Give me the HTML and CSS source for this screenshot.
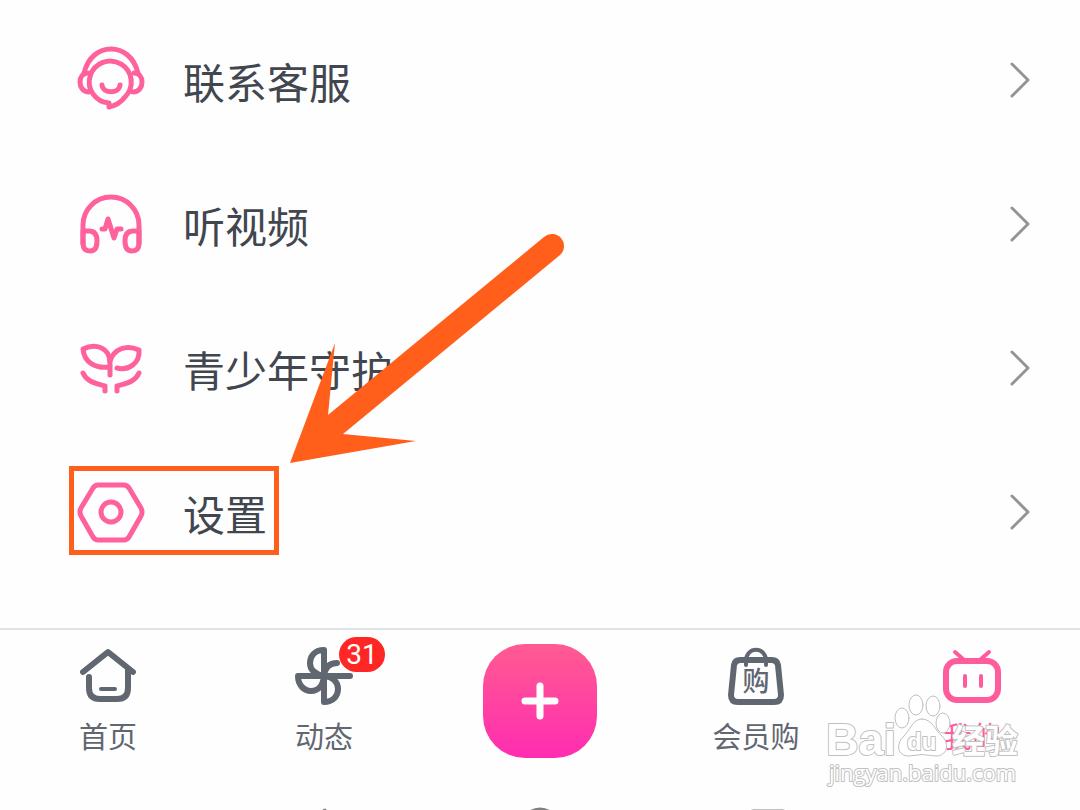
FILE: index.html
```html
<!DOCTYPE html>
<html lang="zh-CN">
<head>
    <meta charset="UTF-8">
    <meta name="viewport" content="width=device-width, initial-scale=1">
    <title>我的</title>
    <link rel="stylesheet" href="styles.css">
</head>
<body>

<main class="menu">
    <a class="row" href="#service">
        <svg class="row-icon" viewBox="0 0 72 72">
            <path d="M34 59A21 21 0 1 1 50 53Q44 61 34 63Z"/>
            <path d="M9 29C13 13 24 5 36 5S59 13 63 29"/>
            <path d="M13 29C8 29 5 33 5 38S8 48 14 48M59 29C64 29 67 33 67 38S64 48 58 48"/>
            <path d="M27 41C28 50 44 50 45 41"/>
        </svg>
        <span class="row-text">联系客服</span>
        <svg class="arrow" viewBox="0 0 24 40"><path d="M4 4L20 20L4 36"/></svg>
    </a>
    <a class="row" href="#listen">
        <svg class="row-icon" viewBox="0 0 72 72">
            <path d="M8 56V37A28 28 0 0 1 64 37V56"/>
            <path d="M8 43H14C20 43 22 47 22 53S20 63 15 63S8 60 8 55ZM64 43H58C52 43 50 47 50 53S52 63 57 63S64 60 64 55Z"/>
            <path d="M27 41H30L33 31L39 50L42 41H46"/>
        </svg>
        <span class="row-text">听视频</span>
        <svg class="arrow" viewBox="0 0 24 40"><path d="M4 4L20 20L4 36"/></svg>
    </a>
    <a class="row" href="#youth">
        <svg class="row-icon" viewBox="0 0 72 72">
            <path d="M35 35C20 37 9 30 8 17C20 11 35 15 35 31V43"/>
            <path d="M35 29C39 17 51 12 64 18C65 31 54 39 42 36"/>
            <path d="M8 41C12 50 20 51 30 54V59M64 41C60 50 52 51 42 54V59"/>
        </svg>
        <span class="row-text">青少年守护</span>
        <svg class="arrow" viewBox="0 0 24 40"><path d="M4 4L20 20L4 36"/></svg>
    </a>
    <a class="row marked" href="#settings">
        <svg class="row-icon" viewBox="0 0 72 72">
            <path d="M23 9H49Q52 9 54 12L66 32Q68 36 66 40L54 61Q52 64 49 64H23Q20 64 18 61L6 40Q4 36 6 32L18 12Q20 9 23 9Z"/>
            <circle cx="36" cy="36" r="10"/>
        </svg>
        <span class="row-text">设置</span>
        <svg class="arrow" viewBox="0 0 24 40"><path d="M4 4L20 20L4 36"/></svg>
    </a>

    <svg class="pointer" viewBox="0 0 280 232">
        <path d="M2 231L128 209L55 202L272 23A12 12 0 0 0 256 5L40 183L47 111Z"/>
    </svg>
</main>

<nav class="tabs">
    <a class="tab" href="#home">
        <svg class="tab-icon" viewBox="0 0 64 64">
            <path d="M7 28L32 8L57 28M13 33V44Q13 55 24 55H41Q52 55 52 44V25"/>
            <path class="thin" d="M25 45H39"/>
        </svg>
        <span class="tab-text">首页</span>
    </a>
    <a class="tab" href="#feed">
        <span class="icon-box">
            <svg class="tab-icon" viewBox="0 0 64 64">
                <path d="M32 32V6C22 6 18 13 18 19S22 30 32 32"/>
                <path d="M32 32H6C6 41 12 47 19 47S31 42 32 32"/>
                <path d="M32 32V58C41 58 46 52 46 45S41 33 32 32"/>
                <path d="M32 32H58M32 32C33 23 38 19 45 19"/>
            </svg>
            <span class="badge">31</span>
        </span>
        <span class="tab-text">动态</span>
    </a>
    <button class="publish" type="button" aria-label="发布">
        <svg viewBox="0 0 38 38"><path d="M19 4V34M4 19H34"/></svg>
    </button>
    <a class="tab" href="#mall">
        <svg class="tab-icon" viewBox="0 0 64 64">
            <path d="M16 16H48Q53 16 54 21L57 51Q57 58 50 58H14Q7 58 7 51L10 21Q11 16 16 16Z"/>
            <path class="thin" d="M22 21V17C22 2 42 2 42 17V21"/>
            <text x="32" y="47" text-anchor="middle">购</text>
        </svg>
        <span class="tab-text">会员购</span>
    </a>
    <a class="tab active" href="#me">
        <svg class="tab-icon" viewBox="0 0 64 64">
            <rect x="6" y="17" width="52" height="39" rx="11"/>
            <path class="thin" d="M15 8L23 15M49 8L41 15M25 32V42M41 32V42"/>
        </svg>
        <span class="tab-text">我的</span>
    </a>
</nav>

<div class="system">
    <svg viewBox="0 0 40 40"><path d="M33 3L6 20L33 37Z"/></svg>
    <svg viewBox="0 0 40 40"><circle cx="20" cy="20" r="18"/></svg>
    <svg viewBox="0 0 40 40"><rect x="2" y="4" width="36" height="34" rx="3"/></svg>
</div>

<svg class="watermark" viewBox="0 0 200 100">
    <text class="brand" x="0" y="65">Bai</text>
    <text class="cn" x="126" y="63">经验</text>
    <ellipse cx="76" cy="28" rx="7" ry="10"/>
    <ellipse cx="90" cy="15" rx="7" ry="10"/>
    <ellipse cx="107" cy="16" rx="7" ry="10"/>
    <ellipse cx="117" cy="33" rx="7" ry="10"/>
    <path d="M96 29C106 29 109 40 116 46C124 54 121 66 110 66Q96 63 83 66C71 66 70 54 77 47C84 41 86 29 96 29Z"/>
    <text class="du" x="81" y="60">du</text>
    <text class="url" x="3" y="91">jingyan.baidu.com</text>
</svg>

</body>
</html>
```
FILE: styles.css
```css
* {
    box-sizing: border-box;
}
body {
    position: relative;
    height: 100vh;
    margin: 0;
    overflow: hidden;
    background: #fefefe;
    font-family: "Noto Sans CJK SC", sans-serif;
}
a {
    color: inherit;
    text-decoration: none;
}
svg {
    display: block;
    fill: none;
    stroke-linecap: round;
    stroke-linejoin: round;
}

/* 菜单 */
.menu {
    position: relative;
    padding: 8px 0 44px;
}
.row {
    position: relative;
    display: flex;
    align-items: center;
    gap: 36px;
    height: 144px;
    padding: 0 48px 0 75px;
    color: #41464f;
}
.row-icon {
    width: 72px;
    height: 72px;
    stroke: #ff619d;
    stroke-width: 5;
}
.row-text {
    flex: 1;
    padding-top: 2px;
    font-size: 42px;
    line-height: 60px;
}
.arrow {
    width: 24px;
    height: 40px;
    stroke: #949494;
    stroke-width: 3;
}
.marked::after {
    content: "";
    box-sizing: border-box;
    position: absolute;
    top: 26px;
    left: 69px;
    width: 210px;
    height: 89px;
    border: 5px solid #ff5f1c;
}
.pointer {
    position: absolute;
    top: 232px;
    left: 288px;
    width: 280px;
    height: 232px;
    fill: #ff5f1a;
}

/* 底部导航 */
.tabs {
    display: grid;
    grid-template-columns: repeat(5, 1fr);
    height: 176px;
    padding-top: 14px;
    border-top: 2px solid #dfe3e8;
    color: #606771;
}
.tab {
    display: flex;
    flex-direction: column;
    align-items: center;
    gap: 7px;
}
.tab-icon {
    width: 64px;
    height: 64px;
    stroke: currentColor;
    stroke-width: 6;
}
.tab-icon .thin {
    stroke-width: 4;
}
.tab-icon text {
    fill: currentColor;
    stroke: none;
    font-size: 27px;
    font-weight: 500;
}
.tab-text {
    font-size: 29px;
    line-height: 40px;
}
.active {
    color: #ff5c9e;
}
.icon-box {
    position: relative;
}
.badge {
    position: absolute;
    top: -7px;
    left: 47px;
    width: 46px;
    height: 35px;
    border-radius: 18px;
    background: #ff2626;
    color: #fff;
    font-family: Roboto, sans-serif;
    font-size: 28px;
    line-height: 36px;
    text-align: center;
}
.publish {
    display: flex;
    align-items: center;
    justify-content: center;
    justify-self: center;
    width: 114px;
    height: 114px;
    padding: 0;
    border: 0;
    border-radius: 42px;
    background: linear-gradient(#ff5b91, #ff2db1);
}
.publish svg {
    width: 38px;
    height: 38px;
    stroke: #fff;
    stroke-width: 7;
}

/* 系统按键 */
.system {
    display: flex;
    justify-content: center;
    gap: 188px;
    padding-top: 3px;
}
.system svg {
    width: 40px;
    height: 40px;
    stroke: #808080;
    stroke-width: 3;
}

/* 水印 */
.watermark {
    position: absolute;
    right: 54px;
    bottom: 20px;
    width: 200px;
    height: 100px;
    fill: #fff;
    stroke: #c0c0c0;
    stroke-width: 1;
}
.watermark text {
    paint-order: stroke;
    stroke-width: 2;
}
.brand {
    font: bold 45px "Liberation Sans", sans-serif;
}
.du {
    font: bold 24px "Liberation Sans", sans-serif;
}
.cn {
    font-size: 33px;
    font-weight: 700;
}
.url {
    font: 22px "Open Sans", sans-serif;
}
```
